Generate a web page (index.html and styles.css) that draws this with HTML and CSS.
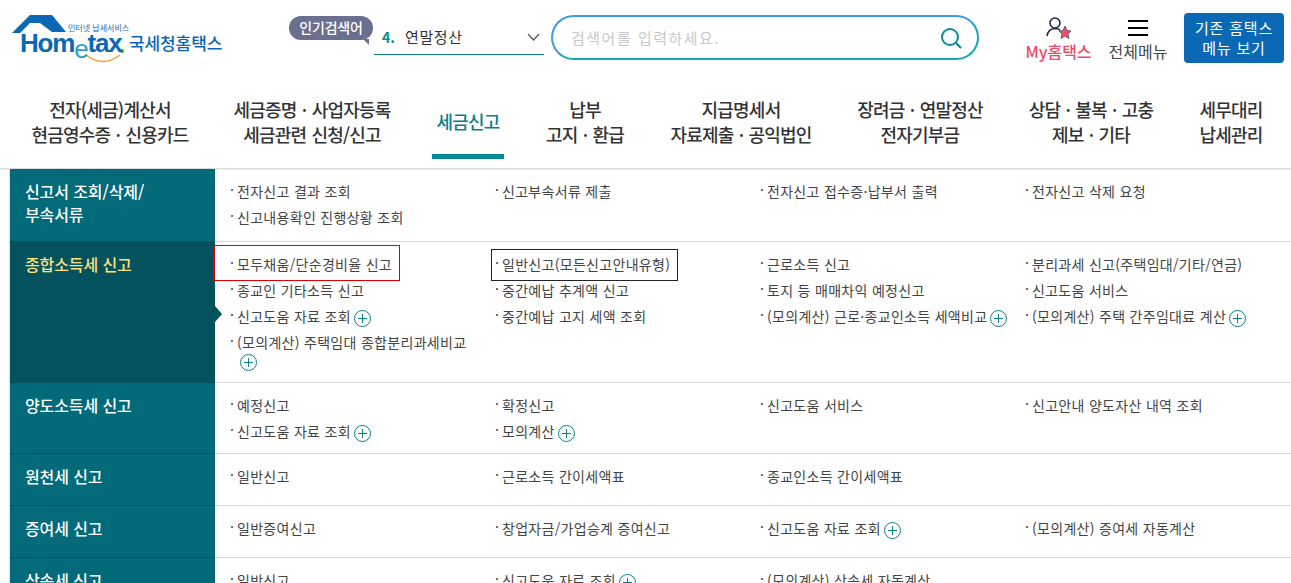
FILE: index.html
```html
<!DOCTYPE html>
<html lang="ko">
<head>
    <meta charset="UTF-8">
    <title>국세청 홈택스</title>
    <link rel="stylesheet" href="styles.css">
</head>
<body>
    <header class="top">
        <div class="logo">
            <svg class="logo-art" width="125" height="64" viewBox="0 0 125 64">
                <path d="M12 33 L30 15 L52 15 L66 32 L52 32 L40 23 L30 23 L20 33 Z" fill="#0a68b4"/>
                <path d="M86 55 Q103 68 120 55" fill="none" stroke="#f0a030" stroke-width="1.5"/>
                <circle cx="122" cy="51" r="2" fill="#3aa535"/>
            </svg>
            <span class="logo-small">인터넷 납세서비스</span>
            <span class="logo-word">Hom<span class="logo-e">e</span>tax</span>
            <span class="logo-name">국세청홈택스</span>
        </div>
        <div class="popular">
            <span class="popular-tag">인기검색어</span>
            <div class="popular-select">
                <b>4.</b><span>연말정산</span>
                <svg width="13" height="8" viewBox="0 0 13 8"><path d="M1 1 L6.5 7 L12 1" fill="none" stroke="#555" stroke-width="1.2"/></svg>
            </div>
        </div>
        <div class="search">
            <span class="search-text">검색어를 입력하세요.</span>
            <svg width="24" height="24" viewBox="0 0 24 24"><circle cx="11" cy="11" r="8" fill="none" stroke="#0a8a96" stroke-width="2"/><path d="M17 17 L22 22" stroke="#0a8a96" stroke-width="2.2"/></svg>
        </div>
        <a class="tool tool-my">
            <svg width="28" height="24" viewBox="0 0 28 24">
                <circle cx="10" cy="7" r="5" fill="none" stroke="#1d2a44" stroke-width="1.6"/>
                <path d="M2 20 Q3 13 10 12.5 Q13 12.5 15 14" fill="none" stroke="#1d2a44" stroke-width="1.6"/>
                <path d="M20 10 L22 14.5 L26 15 L23 18 L24 22.5 L20 20 L16 22.5 L17 18 L14 15 L18 14.5 Z" fill="#f2506e" stroke="#1d2a44" stroke-width=".6"/>
            </svg>
            <span>My홈택스</span>
        </a>
        <a class="tool tool-all">
            <svg width="20" height="24" viewBox="0 0 20 24"><path d="M0 5 H20 M0 12 H20 M0 19 H20" stroke="#000" stroke-width="2"/></svg>
            <span>전체메뉴</span>
        </a>
        <a class="old-menu">기존 홈택스<br>메뉴 보기</a>
    </header>

    <nav class="gnb">
        <a>전자(세금)계산서<br>현금영수증 · 신용카드</a>
        <a>세금증명 · 사업자등록<br>세금관련 신청/신고</a>
        <a class="on">세금신고</a>
        <a>납부<br>고지 · 환급</a>
        <a>지급명세서<br>자료제출 · 공익법인</a>
        <a>장려금 · 연말정산<br>전자기부금</a>
        <a>상담 · 불복 · 고충<br>제보 · 기타</a>
        <a>세무대리<br>납세관리</a>
    </nav>

    <main class="menu-table">
        <section class="row">
            <h3 class="row-title">신고서 조회/삭제/<br>부속서류</h3>
            <ul class="links">
                <li>전자신고 결과 조회</li>
                <li>신고부속서류 제출</li>
                <li>전자신고 접수증·납부서 출력</li>
                <li>전자신고 삭제 요청</li>
                <li>신고내용확인 진행상황 조회</li>
            </ul>
        </section>
        <section class="row row-on">
            <h3 class="row-title">종합소득세 신고</h3>
            <ul class="links">
                <li><span class="box box-red">모두채움/단순경비율 신고</span></li>
                <li><span class="box box-black">일반신고(모든신고안내유형)</span></li>
                <li>근로소득 신고</li>
                <li>분리과세 신고(주택임대/기타/연금)</li>
                <li>종교인 기타소득 신고</li>
                <li>중간예납 추계액 신고</li>
                <li>토지 등 매매차익 예정신고</li>
                <li>신고도움 서비스</li>
                <li>신고도움 자료 조회<i class="plus"></i></li>
                <li>중간예납 고지 세액 조회</li>
                <li class="wide">(모의계산) 근로·종교인소득 세액비교<i class="plus"></i></li>
                <li class="wide">(모의계산) 주택 간주임대료 계산<i class="plus"></i></li>
                <li>(모의계산) 주택임대 종합분리과세비교 <i class="plus"></i></li>
            </ul>
        </section>
        <section class="row">
            <h3 class="row-title">양도소득세 신고</h3>
            <ul class="links">
                <li>예정신고</li>
                <li>확정신고</li>
                <li>신고도움 서비스</li>
                <li>신고안내 양도자산 내역 조회</li>
                <li>신고도움 자료 조회<i class="plus"></i></li>
                <li>모의계산<i class="plus"></i></li>
            </ul>
        </section>
        <section class="row">
            <h3 class="row-title">원천세 신고</h3>
            <ul class="links">
                <li>일반신고</li>
                <li>근로소득 간이세액표</li>
                <li>종교인소득 간이세액표</li>
            </ul>
        </section>
        <section class="row">
            <h3 class="row-title">증여세 신고</h3>
            <ul class="links">
                <li>일반증여신고</li>
                <li>창업자금/가업승계 증여신고</li>
                <li>신고도움 자료 조회<i class="plus"></i></li>
                <li>(모의계산) 증여세 자동계산</li>
            </ul>
        </section>
        <section class="row">
            <h3 class="row-title">상속세 신고</h3>
            <ul class="links">
                <li>일반신고</li>
                <li>신고도움 자료 조회<i class="plus"></i></li>
                <li>(모의계산) 상속세 자동계산</li>
            </ul>
        </section>
    </main>
</body>
</html>
```

FILE: styles.css
```css
html, body {
    margin: 0;
    height: 583px;
    overflow: hidden;
    background-color: #fff;
}

body {
    font-family: "Noto Sans CJK KR", "Noto Sans", sans-serif;
    color: #333;
}

/* Header */
.top {
    display: flex;
    align-items: flex-start;
    height: 85px;
    box-sizing: border-box;
}

.logo {
    position: relative;
    width: 289px;
    height: 70px;
    flex: none;
}

.logo-art {
    position: absolute;
    top: 0;
    left: 0;
}

.logo-small {
    position: absolute;
    top: 23px;
    left: 68px;
    font-size: 8px;
    line-height: 10px;
    color: #1b6cb0;
    white-space: nowrap;
}

.logo-word {
    position: absolute;
    top: 33px;
    left: 20px;
    font-family: "Liberation Sans", sans-serif;
    font-size: 26px;
    line-height: 20px;
    font-weight: bold;
    letter-spacing: -1.2px;
    color: #0a68b4;
    white-space: nowrap;
}

.logo-e {
    position: relative;
    top: 6px;
    color: #2aa0c8;
    font-weight: normal;
}

.logo-name {
    position: absolute;
    top: 31px;
    left: 129px;
    font-size: 17px;
    line-height: 24px;
    font-weight: 500;
    letter-spacing: -.1px;
    color: #0a68b4;
    white-space: nowrap;
}

.popular {
    position: relative;
    width: 255px;
    height: 56px;
    flex: none;
}

.popular-tag {
    position: absolute;
    top: 16px;
    left: 0;
    width: 84px;
    height: 24px;
    border-radius: 12px;
    background-color: #6b6f8f;
    color: #fff;
    font-size: 14px;
    font-weight: 500;
    line-height: 23px;
    text-align: center;
    letter-spacing: -.2px;
}

.popular-tag::after {
    content: "";
    position: absolute;
    right: 4px;
    bottom: -5px;
    border-top: 6px solid #6b6f8f;
    border-left: 6px solid transparent;
}

.popular-select {
    position: absolute;
    top: 19px;
    left: 85px;
    width: 170px;
    height: 36px;
    box-sizing: border-box;
    border-bottom: 1px solid #0a8088;
    display: flex;
    align-items: center;
    padding-left: 8px;
    font-size: 15px;
    letter-spacing: .6px;
}

.popular-select b {
    color: #0a8a96;
    width: 23px;
    font-size: 14px;
    letter-spacing: 0;
}

.popular-select svg {
    margin-left: auto;
    margin-right: 4px;
}

.search {
    width: 428px;
    height: 45px;
    flex: none;
    margin: 15px 0 0 7px;
    box-sizing: border-box;
    border: 2px solid;
    border-color: #3a9be0 #14a8bc #14a8bc #3a9be0;
    border-radius: 23px;
    display: flex;
    align-items: center;
    justify-content: space-between;
    padding: 0 14px 0 18px;
    font-size: 15px;
    letter-spacing: 1.5px;
    color: #c8c8c8;
}

.tool {
    display: flex;
    flex-direction: column;
    align-items: center;
    flex: none;
    font-size: 16px;
    line-height: 22px;
    color: #444;
    white-space: nowrap;
}

.tool-my {
    margin: 16px 0 0 46px;
    color: #f0486a;
    font-weight: 500;
    width: 67px;
}

.tool-all {
    margin: 16px 0 0 16px;
    width: 60px;
}

.old-menu {
    margin: 13px 0 0 16px;
    width: 100px;
    height: 50px;
    flex: none;
    border-radius: 4px;
    background-color: #0a68b4;
    color: #fff;
    font-size: 15px;
    line-height: 20px;
    text-align: center;
    padding-top: 5px;
    box-sizing: border-box;
    letter-spacing: .8px;
}

/* Main navigation */
.gnb {
    display: flex;
    height: 84px;
    box-sizing: border-box;
    border-bottom: 1px solid #ddd;
    box-shadow: 0 1px 1px #eee;
    padding-bottom: 10px;
}

.gnb a {
    display: flex;
    align-items: center;
    justify-content: center;
    flex: none;
    text-align: center;
    font-size: 18px;
    line-height: 25px;
    font-weight: 500;
    letter-spacing: -.8px;
    word-spacing: 1px;
    color: #333;
    white-space: nowrap;
}

.gnb a:nth-child(1) { width: 220px; }
.gnb a:nth-child(2) { width: 184px; }
.gnb a:nth-child(4) { width: 106px; }
.gnb a:nth-child(5) { width: 206px; }
.gnb a:nth-child(6) { width: 152px; }
.gnb a:nth-child(7) { width: 190px; }
.gnb a:nth-child(8) { width: 90px; }

.gnb a.on {
    position: relative;
    width: 72px;
    margin: 0 28px;
    color: #0a8088;
}

.gnb a.on::after {
    content: "";
    position: absolute;
    left: 0;
    right: 0;
    bottom: -1px;
    height: 5px;
    background-color: #008a96;
}

/* Menu table */
.menu-table {
    margin-left: 9px;
    border-left: 1px solid #e0e0e0;
}

.row {
    display: flex;
    min-height: 51px;
    border-bottom: 1px solid #d8d8d8;
}

.row-title {
    position: relative;
    flex: none;
    width: 205px;
    box-sizing: border-box;
    margin: 0 0 -1px;
    padding: 11px 15px 15px;
    background-color: #026a78;
    border-bottom: 1px solid #04505c;
    color: #fff;
    font-size: 16px;
    line-height: 23px;
    font-weight: 500;
    letter-spacing: -.1px;
}

.row-on .row-title {
    background-color: #05525f;
    color: #ffe27a;
}

.row-on .row-title::after {
    content: "";
    position: absolute;
    top: 64px;
    right: -7px;
    border-left: 7px solid #05525f;
    border-top: 8px solid transparent;
    border-bottom: 8px solid transparent;
}

.links {
    display: grid;
    grid-template-columns: repeat(4, 265px);
    align-content: start;
    list-style: none;
    margin: 0;
    padding: 9px 0 9px 15px;
    font-size: 14px;
    line-height: 18px;
    letter-spacing: .3px;
    color: #444;
}

.links li {
    position: relative;
    padding: 4px 26px 4px 7px;
}

.links li.wide {
    padding-right: 0;
}

.links li::before {
    content: "·";
    position: absolute;
    left: 0;
    top: 2px;
}

.box {
    display: inline-block;
    white-space: nowrap;
}

.box::before {
    content: "";
    position: absolute;
    border: 1px solid;
    box-sizing: border-box;
}

.box-red::before {
    top: -6px;
    left: -16px;
    width: 186px;
    height: 36px;
    border-color: #e00000;
}

.box-black::before {
    top: -2px;
    left: -4px;
    width: 187px;
    height: 32px;
    border-color: #222;
}

.plus {
    display: inline-block;
    width: 17px;
    height: 17px;
    margin: -4px 0 -4px 3px;
    border: 1px solid #0a8088;
    border-radius: 50%;
    box-sizing: border-box;
    vertical-align: middle;
    background:
        linear-gradient(#0a8088, #0a8088) center / 9px 1px no-repeat,
        linear-gradient(#0a8088, #0a8088) center / 1px 9px no-repeat;
}
```
